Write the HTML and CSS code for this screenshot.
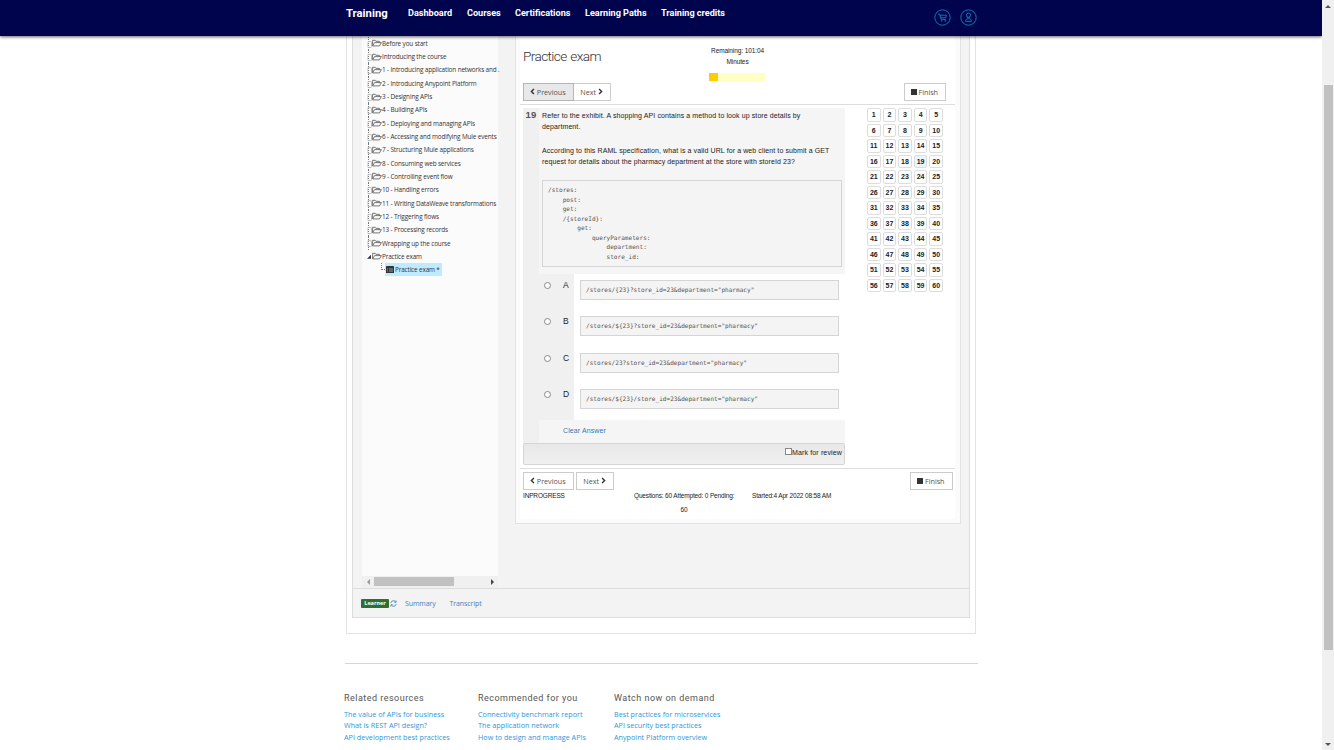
FILE: index.html
```html
<!DOCTYPE html>
<html lang="en">
<head>
  <meta charset="UTF-8" />
  <title>Practice exam</title>
  <link rel="stylesheet" href="styles.css">
</head>
<body>
  <div class="page">
    <header class="topbar">
      <a class="brand">Training</a>
      <nav class="nav">
        <a class="n1">Dashboard</a>
        <a class="n2">Courses</a>
        <a class="n3">Certifications</a>
        <a class="n4">Learning Paths</a>
        <a class="n5">Training credits</a>
      </nav>
      <div class="account">
        <svg viewBox="0 0 17 17"><circle cx="8.5" cy="8.5" r="7.7"/><path d="M4 5h1.6l1.7 5.4h4.6M6 6.2h6.4l-.8 2.6H6.8"/><circle cx="7.7" cy="12" r=".4"/><circle cx="11.2" cy="12" r=".4"/></svg>
        <svg viewBox="0 0 17 17"><circle cx="8.5" cy="8.5" r="7.7"/><circle cx="8.5" cy="6.2" r="2.1"/><path d="M7.6 8.2v1.3M9.4 8.2v1.3M5.6 12.4c0-2 1.3-2.7 2.9-2.7s2.9.7 2.9 2.7z"/></svg>
      </div>
    </header>

    <main class="frame">
      <div class="course">
        <div class="panes">
          <aside class="tree">
            <ul id="tree"></ul>
            <div class="hscroll"><i class="left"></i><b></b><i class="right"></i></div>
          </aside>

          <section class="exam">
            <div class="exam-body">
              <div class="exam-head">
                <h1>Practice exam</h1>
                <div class="timer">
                  <p>Remaining: 101:04<br>Minutes</p>
                  <div class="progress"><span></span></div>
                </div>
              </div>
              <div class="controls top">
                <div class="btn-group">
                  <button class="btn prev active"><svg class="chev" viewBox="0 0 6 8"><path d="M4.7 1L1.7 4l3 3"/></svg>Previous</button>
                  <button class="btn next">Next<svg class="chev" viewBox="0 0 6 8"><path d="M1.3 1l3 3-3 3"/></svg></button>
                </div>
                <button class="btn finish"><i class="stop"></i>Finish</button>
              </div>

              <div class="work">
                <div class="question">
                  <div class="prompt">
                    <div class="number">19</div>
                    <div class="text">
                      <p>Refer to the exhibit. A shopping API contains a method to look up store details by<br>department.</p>
                      <p>According to this RAML specification, what is a valid URL for a web client to submit a GET<br>request for details about the pharmacy department at the store with storeId 23?</p>
<pre>/stores:
    post:
    get:
    /{storeId}:
        get:
            queryParameters:
                department:
                store_id:</pre>
                    </div>
                  </div>
                  <div class="option"><label><input type="radio" name="a">A</label><code>/stores/{23}?store_id=23&amp;department="pharmacy"</code></div>
                  <div class="option"><label><input type="radio" name="a">B</label><code>/stores/${23}?store_id=23&amp;department="pharmacy"</code></div>
                  <div class="option"><label><input type="radio" name="a">C</label><code>/stores/23?store_id=23&amp;department="pharmacy"</code></div>
                  <div class="option"><label><input type="radio" name="a">D</label><code>/stores/${23}/store_id=23&amp;department="pharmacy"</code></div>
                  <div class="clear"><a>Clear Answer</a></div>
                  <div class="review"><label><input type="checkbox">Mark for review</label></div>
                </div>
                <div class="numbers" id="numbers"></div>
              </div>

              <div class="controls bottom">
                <button class="btn prev"><svg class="chev" viewBox="0 0 6 8"><path d="M4.7 1L1.7 4l3 3"/></svg>Previous</button>
                <button class="btn next">Next<svg class="chev" viewBox="0 0 6 8"><path d="M1.3 1l3 3-3 3"/></svg></button>
                <button class="btn finish"><i class="stop"></i>Finish</button>
              </div>
              <div class="status">
                <span class="state">INPROGRESS</span>
                <span class="count">Questions: 60 Attempted: 0 Pending:<br>60</span>
                <span class="started">Started:4 Apr 2022 08:58 AM</span>
              </div>
            </div>
          </section>
        </div>

        <div class="course-foot">
          <span class="role">Learner</span>
          <svg class="refresh" viewBox="0 0 8 8"><path d="M1 3.4A3 3 0 0 1 6.4 2.1M7 4.6A3 3 0 0 1 1.6 5.9M6.9.6v2H4.9M1.1 7.4v-2h2"/></svg>
          <a class="summary">Summary</a>
          <a class="transcript">Transcript</a>
        </div>
      </div>
    </main>

    <footer class="resources">
      <div>
        <h2>Related resources</h2>
        <a>The value of APIs for business</a>
        <a>What is REST API design?</a>
        <a>API development best practices</a>
      </div>
      <div>
        <h2>Recommended for you</h2>
        <a>Connectivity benchmark report</a>
        <a>The application network</a>
        <a>How to design and manage APIs</a>
      </div>
      <div>
        <h2>Watch now on demand</h2>
        <a>Best practices for microservices</a>
        <a>API security best practices</a>
        <a>Anypoint Platform overview</a>
      </div>
    </footer>
  </div>
  <div class="vscroll"><i class="up"></i><b></b><i class="down"></i></div>

  <script>
    const lessons = [
      "Before you start",
      "Introducing the course",
      "1 - Introducing application networks and .",
      "2 - Introducing Anypoint Platform",
      "3 - Designing APIs",
      "4 - Building APIs",
      "5 - Deploying and managing APIs",
      "6 - Accessing and modifying Mule events",
      "7 - Structuring Mule applications",
      "8 - Consuming web services",
      "9 - Controlling event flow",
      "10 - Handling errors",
      "11 - Writing DataWeave transformations",
      "12 - Triggering flows",
      "13 - Processing records",
      "Wrapping up the course",
      "Practice exam"
    ];

    const folder = '<svg class="folder" viewBox="0 0 10 8"><path d="M.6 6.6V1.3h2.6l.7 1h3.5v1.3M.6 6.9l1.9-3.3h6.9L7.5 6.9z"/></svg>';
    const tree = document.getElementById("tree");
    lessons.forEach((name, i) => {
      const open = i === lessons.length - 1 ? " open" : "";
      tree.innerHTML += `<li class="node${open}"><i class="knob"></i>${folder}<span>${name}</span></li>`;
    });
    tree.innerHTML += '<li class="node leaf"><i class="elbow"></i><span class="selected"><svg viewBox="0 0 8 7"><rect width="8" height="7" rx=".6"/><path d="M1 3h1M3 3h4M1 5h1M3 5h4"/></svg>Practice exam *</span></li>';

    const numbers = document.getElementById("numbers");
    for (let n = 1; n <= 60; n++) {
      numbers.innerHTML += `<span${n === 19 ? ' class="current"' : ""}>${n}</span>`;
    }
  </script>
</body>
</html>
```

FILE: styles.css
```css
* {
  box-sizing: border-box;
}

body {
  margin: 0;
  display: flex;
  width: 1334px;
  height: 750px;
  overflow: hidden;
  background: #fff;
  color: #333;
  font-family: "Open Sans", sans-serif;
  font-size: 7px;
}

h1, h2, p, ul, pre {
  margin: 0;
  padding: 0;
  font-weight: 400;
}

.page {
  width: 1322px;
  height: 750px;
  overflow: hidden;
}

/* top navigation */
.topbar {
  position: relative;
  z-index: 2;
  display: flex;
  height: 36px;
  padding-left: 346px;
  background: #00044c;
  box-shadow: 0 1px 3px rgba(0, 0, 0, 0.6);
  color: #fff;
  font-family: Roboto, sans-serif;
  font-weight: 700;
  white-space: nowrap;
}

.brand {
  width: 62px;
  padding-top: 6px;
  font-size: 11.3px;
  line-height: 15px;
}

.nav {
  display: flex;
  width: 526px;
  padding-top: 6px;
  font-size: 9.1px;
  line-height: 14px;
}

.n1 { width: 59px; }
.n2 { width: 48px; }
.n3 { width: 70px; }
.n4 { width: 76px; }

.account {
  display: flex;
  gap: 9px;
  padding-top: 9px;
}

.account svg {
  width: 17px;
  height: 17px;
  fill: none;
  stroke: #0879b9;
}

/* course frame */
.frame {
  width: 630px;
  height: 598px;
  margin-left: 346px;
  padding: 0 5px 15px;
  border: 1px solid #e3e3e3;
  border-top: 0;
}

.course {
  height: 582px;
  border: 1px solid #ddd;
  border-top: 0;
  background: #f3f3f3;
}

.panes {
  display: flex;
  height: 553px;
  border-bottom: 1px solid #ddd;
}

.tree {
  display: flex;
  flex-direction: column;
  justify-content: space-between;
  width: 136px;
  height: 552px;
  margin-left: 9px;
  background: #fbfbfb;
}

.tree ul {
  padding: 0.7px 0 0 5px;
  list-style: none;
}

.node {
  display: flex;
  align-items: center;
  height: 13.32px;
  font-size: 6.4px;
  letter-spacing: -0.14px;
  white-space: nowrap;
}

.node > * {
  flex-shrink: 0;
}

.node .knob {
  width: 4px;
  height: 100%;
  margin-left: 1px;
  border-left: 1px dotted #777;
}

.node .knob::after {
  content: "";
  display: block;
  width: 3px;
  height: 5px;
  margin: 4px 0 0 -2px;
  border: 1px solid #bbb;
  border-left-color: #ddd;
  border-radius: 2px;
}

.node.open .knob {
  border: 0;
}

.node.open .knob::after {
  width: 4px;
  height: 4px;
  margin: 5px 0 0 -1px;
  border: 0;
  border-radius: 0;
  background: #333;
  clip-path: polygon(100% 0, 100% 100%, 0 100%);
}

.folder {
  width: 10px;
  height: 8px;
  fill: none;
  stroke: #555;
  stroke-width: 0.8;
}

.leaf .elbow {
  width: 4px;
  height: 7px;
  margin: -6px 0 0 14px;
  border: dotted #777;
  border-width: 0 0 1px 1px;
}

.selected {
  display: flex;
  align-items: center;
  height: 13px;
  padding: 0 2px 0 1px;
  background: #beebff;
}

.selected svg {
  width: 8px;
  height: 7px;
  margin-right: 1px;
  fill: #333;
}

.selected path {
  stroke: #beebff;
  stroke-width: 0.6;
}

.hscroll {
  display: flex;
  align-items: center;
  height: 12px;
  padding: 0 4px 1px 5px;
  background: #f0f0f0;
}

.hscroll b {
  width: 80px;
  height: 9px;
  margin: 0 37px 0 4px;
  background: #c1c1c1;
}

.hscroll i, .vscroll i {
  border: solid transparent;
}

.hscroll .left { border-width: 3px 3px 3px 0; border-right-color: #999; }
.hscroll .right { border-width: 3px 0 3px 3px; border-left-color: #444; }

/* exam panel */
.exam {
  width: 446px;
  height: 488px;
  margin-left: 17px;
  padding: 0 5px 4px 4px;
  border: 1px solid #e2e2e2;
  border-width: 0 1px 1px;
  background: #fbfbfb;
}

.exam-body {
  height: 483px;
  background: #fff;
  color: #222;
}

.exam-head {
  display: flex;
  height: 47px;
  padding-left: 3px;
}

h1 {
  width: 184px;
  padding-top: 11px;
  color: #333;
  font-family: Roboto, sans-serif;
  font-weight: 300;
  font-size: 13.6px;
  line-height: 19px;
  letter-spacing: -0.6px;
  word-spacing: 1px;
}

.timer {
  width: 61px;
  padding-top: 8.5px;
  font: 6.5px/11.5px "Liberation Sans", sans-serif;
  letter-spacing: -0.1px;
  text-align: center;
}

.progress {
  width: 56px;
  height: 8px;
  margin: 5.5px 0 0 2px;
  background: #ffffc3;
}

.progress span {
  display: block;
  width: 9px;
  height: 8px;
  background: #fc0;
}

.controls {
  display: flex;
  padding-left: 3px;
}

.controls.top {
  height: 22px;
  border-bottom: 1px solid #ddd;
  justify-content: space-between;
  padding-right: 9px;
}

.btn-group {
  display: flex;
}

.btn {
  display: flex;
  align-items: center;
  justify-content: center;
  gap: 1.5px;
  height: 18px;
  padding: 0 1px 1px 0;
  border: 1px solid #ccc;
  background: #fff;
  color: #555;
  font: 7.2px "Open Sans", sans-serif;
}

.btn.active {
  background: #e8e8e8;
  border-color: #b5b5b5;
}

.prev { width: 51px; }
.next { width: 38px; }
.finish { width: 43px; }
.btn-group .next { width: 37px; border-left: 0; }
.top .finish { width: 42px; }

.chev {
  width: 5px;
  height: 7px;
  fill: none;
  stroke: #333;
  stroke-width: 1.7;
}

.stop {
  width: 6px;
  height: 6px;
  background: #333;
}

.work {
  display: flex;
  height: 364px;
  padding: 3px 0 0 3px;
  border-bottom: 1px solid #ddd;
}

.question {
  width: 322px;
  height: 357px;
  background: linear-gradient(90deg, #f0f0f0 16px, #fff 16px);
  font-family: "Liberation Sans", sans-serif;
  letter-spacing: 0.1px;
}

.prompt {
  display: flex;
  height: 166px;
}

.number {
  width: 16px;
  padding-top: 1px;
  color: #555;
  font-weight: 700;
  font-size: 9.5px;
  line-height: 12px;
  text-align: center;
}

.text {
  width: 306px;
  padding: 2px 3px 0;
  background: #f5f5f5;
  color: #222;
  font-size: 7px;
  line-height: 11.4px;
  white-space: nowrap;
}

.text p {
  margin-bottom: 12px;
}

pre, code {
  border: 1px solid #d5d5d5;
  background: #f4f4f4;
  color: #555;
  font-family: "DejaVu Sans Mono", monospace;
  font-size: 6.08px;
  letter-spacing: 0;
}

pre {
  width: 300px;
  height: 87px;
  margin-top: 12.4px;
  padding: 4px 5px;
  line-height: 9.5px;
}

.option {
  display: flex;
  height: 36.4px;
  background: #fff;
}

.option label {
  display: flex;
  width: 51px;
  height: 37px;
  padding: 8px 0 0 21px;
  background: #f0f0f0;
  font-size: 8.5px;
  line-height: 7px;
}

input {
  appearance: none;
  width: 7px;
  height: 7px;
  margin: 0;
  border: 1px solid #888;
  background: #fff;
}

.option input {
  margin: 0 12px 0 0;
  border-radius: 50%;
}

.option code {
  width: 259px;
  height: 20px;
  margin: 6px 0 0 6px;
  padding-left: 5px;
  line-height: 18px;
}

.clear {
  height: 23px;
  margin: 0.4px 0 0 16px;
  padding-left: 24px;
  background: #f5f5f5;
  color: #337ab7;
  font-size: 7px;
  line-height: 22.5px;
}

.review {
  display: flex;
  justify-content: flex-end;
  height: 22px;
  padding: 5px 2px 0 0;
  border: 1px solid #d5d5d5;
  border-radius: 2px;
  background: linear-gradient(#e8e8e8, #f0f0f0);
}

.review label {
  display: flex;
  font-size: 7.1px;
  line-height: 9px;
}

.review input {
  margin-top: -1px;
}

.numbers {
  display: grid;
  grid-template-columns: repeat(5, 13.6px);
  grid-auto-rows: 13.5px;
  gap: 2.02px;
  margin-left: 22px;
  align-content: start;
  font: 700 7px/12px "Liberation Sans", sans-serif;
  text-align: center;
}

.numbers span {
  border: 1px solid #ddd;
  border-radius: 2px;
}

.numbers .current {
  background: #eaf6ff;
}

.controls.bottom {
  gap: 2px;
  padding-top: 3px;
}

.bottom .finish {
  margin-left: auto;
  margin-right: 2px;
}

.status {
  display: flex;
  padding-left: 3px;
  font: 6.5px/14px "Liberation Sans", sans-serif;
  letter-spacing: -0.16px;
  margin-top: -1px;
  white-space: nowrap;
}

.state { width: 111px; }
.count { width: 100px; text-align: center; }
.started { margin-left: 18px; }

.course-foot {
  display: flex;
  align-items: center;
  height: 28px;
  padding-left: 8px;
  color: #4a7fb8;
  font-size: 7px;
  letter-spacing: -0.08px;
}

.role {
  width: 28px;
  height: 9px;
  border-radius: 1px;
  background: #2f6f2f;
  color: #fff;
  font-weight: 700;
  font-size: 5.6px;
  line-height: 9px;
  text-align: center;
}

.refresh {
  width: 7px;
  height: 7px;
  margin: 0 8px 0 1px;
  fill: none;
  stroke: #4a7fb8;
}

.summary { width: 44.5px; }

/* footer links */
.resources {
  display: grid;
  grid-template-columns: 134px 136px 1fr;
  width: 633px;
  margin: 29px 0 0 345px;
  padding-top: 28px;
  border-top: 1px solid #d5d5d5;
  white-space: nowrap;
}

.resources div {
  margin-left: -1px;
}

.resources h2 {
  margin-bottom: 4.4px;
  color: #555;
  font-family: Roboto, sans-serif;
  font-size: 9px;
  line-height: 13px;
  letter-spacing: 0.48px;
}

.resources a {
  display: block;
  color: #2e97dc;
  font-size: 7.23px;
  line-height: 11.1px;
}

/* window scrollbar */
.vscroll {
  display: flex;
  flex-direction: column;
  align-items: center;
  width: 12px;
  height: 750px;
  padding: 5px 0 4px;
  background: #f0f0f0;
}

.vscroll b {
  width: 9px;
  height: 565px;
  margin: 77px 0 auto;
  background: #c1c1c1;
}

.vscroll .up { border-width: 0 3px 3px; border-bottom-color: #555; }
.vscroll .down { border-width: 3px 3px 0; border-top-color: #555; }
```
